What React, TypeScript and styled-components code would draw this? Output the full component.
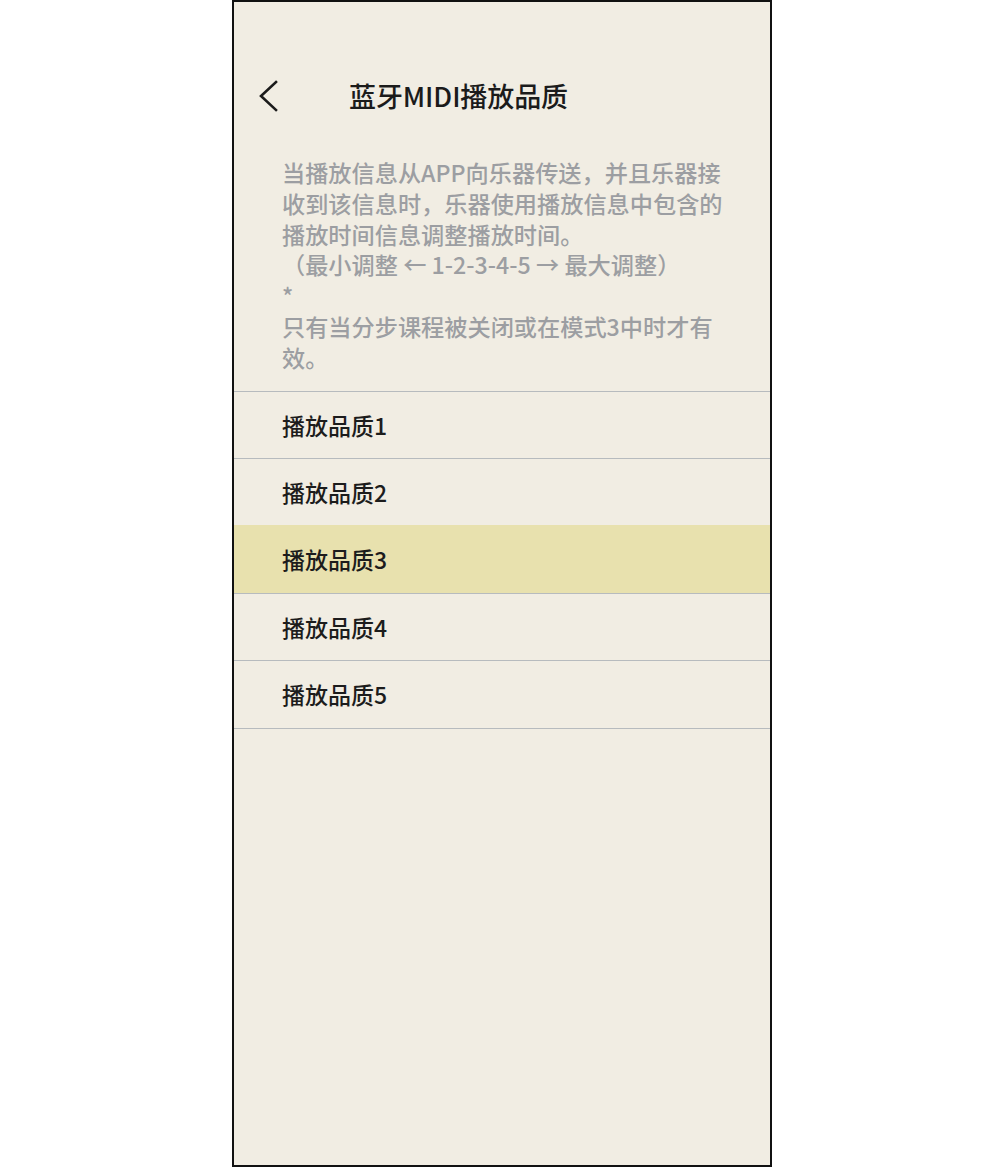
import React from "react";
import styled, { createGlobalStyle } from "styled-components";

const GlobalStyle = createGlobalStyle`
  html, body {
    margin: 0;
    padding: 0;
    background: #ffffff;
  }
  body {
    font-family: "Noto Sans CJK SC", "Noto Sans", sans-serif;
  }
`;

const Page = styled.div`
  display: flex;
  padding-left: 232px;
  height: 1167px;
  box-sizing: border-box;
`;

const Phone = styled.div`
  width: 540px;
  height: 1167px;
  box-sizing: border-box;
  border: 2px solid #111111;
  background: #f1ede3;
  display: flex;
  flex-direction: column;
  padding-top: 63px;
`;

const Header = styled.header`
  display: flex;
  align-items: center;
  height: 60px;
  padding-left: 24px;
`;

const BackButton = styled.button`
  display: flex;
  align-items: center;
  justify-content: center;
  width: 22px;
  height: 34px;
  padding: 0;
  margin-top: 2px;
  border: none;
  background: transparent;
  cursor: pointer;
`;

const Title = styled.h1`
  margin: 0 0 0 69px;
  font-size: 27px;
  font-weight: 500;
  color: #1b1b1b;
  letter-spacing: -0.1px;
  line-height: 1;
`;

const Description = styled.div`
  padding: 32px 46px 18px 48px;
  font-size: 23.2px;
  line-height: 30.8px;
  color: #9c9ea2;
  font-weight: 500;
`;

const Line = styled.div`
  display: block;
`;

const List = styled.ul`
  list-style: none;
  margin: 0;
  padding: 0;
  border-top: 1px solid #b7bbbe;
`;

const Row = styled.li<{ $selected?: boolean }>`
  display: flex;
  align-items: center;
  box-sizing: border-box;
  height: ${(p) => (p.$selected ? "68.4px" : "67.4px")};
  margin-top: ${(p) => (p.$selected ? "-1px" : "0")};
  padding-left: 48px;
  border-bottom: 1px solid #b7bbbe;
  background: ${(p) => (p.$selected ? "#e8e1ae" : "transparent")};
  font-size: 23px;
  font-weight: 500;
  color: #1c1c1c;
`;

const items = ["播放品质1", "播放品质2", "播放品质3", "播放品质4", "播放品质5"];

export default function App() {
  return (
    <>
      <GlobalStyle />
      <Page>
        <Phone>
          <Header>
            <BackButton aria-label="返回">
              <svg width="22" height="34" viewBox="0 0 22 34" fill="none">
                <polyline
                  points="18,3 3,17 18,31"
                  stroke="#1b1b1b"
                  strokeWidth="2.6"
                  strokeLinecap="square"
                  strokeLinejoin="miter"
                  fill="none"
                />
              </svg>
            </BackButton>
            <Title>蓝牙MIDI播放品质</Title>
          </Header>
          <Description>
            <Line>当播放信息从APP向乐器传送，并且乐器接收到该信息时，乐器使用播放信息中包含的播放时间信息调整播放时间。</Line>
            <Line>（最小调整 ← 1-2-3-4-5 → 最大调整）</Line>
            <Line>*</Line>
            <Line>只有当分步课程被关闭或在模式3中时才有效。</Line>
          </Description>
          <List>
            {items.map((label, i) => (
              <Row key={label} $selected={i === 2}>
                {label}
              </Row>
            ))}
          </List>
        </Phone>
      </Page>
    </>
  );
}
